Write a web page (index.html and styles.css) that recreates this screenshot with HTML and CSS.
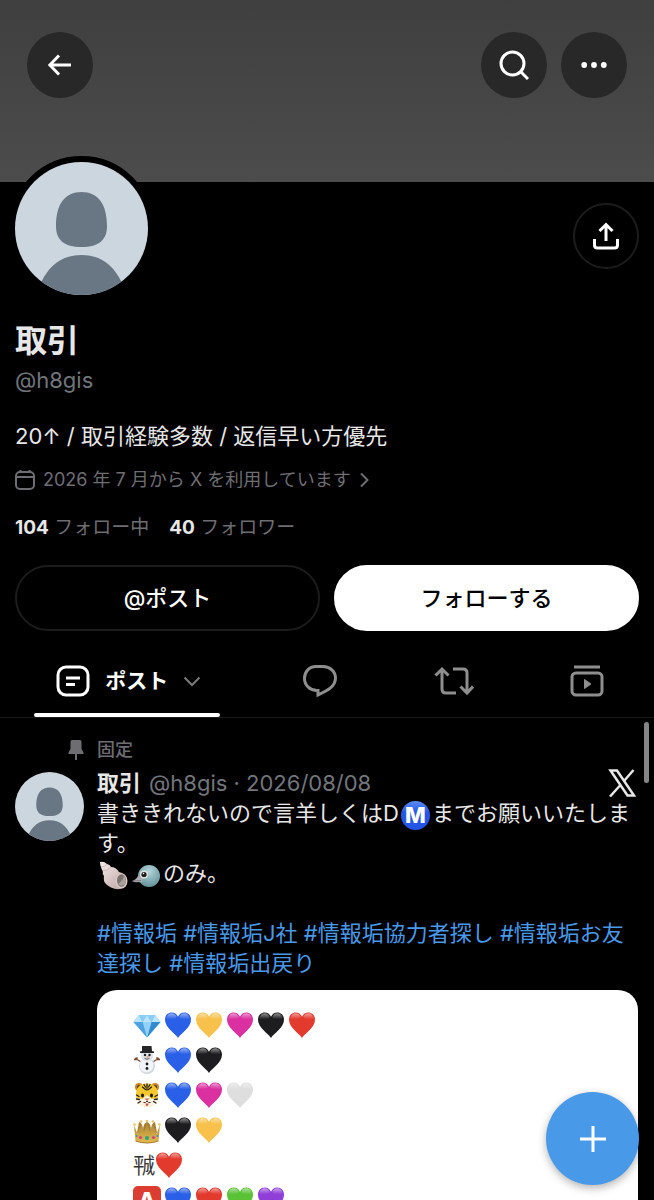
FILE: index.html
```
<!DOCTYPE html>
<html lang="ja">
<head>
  <meta charset="UTF-8">
  <meta name="viewport" content="width=device-width, initial-scale=1">
  <title>取引 (@h8gis)</title>
  <link rel="stylesheet" href="styles.css">
</head>
<body>
  <!-- shared drawings -->
  <svg class="sprite" aria-hidden="true">
    <defs>
      <linearGradient id="shine" x1="0" y1="0" x2="0" y2="1">
        <stop offset="0" stop-color="#fff" stop-opacity=".5"/>
        <stop offset="1" stop-color="#fff" stop-opacity="0"/>
      </linearGradient>
      <linearGradient id="gold" x1="0" y1="0" x2="0" y2="1">
        <stop offset="0" stop-color="#a98132"/>
        <stop offset="1" stop-color="#e3bc52"/>
      </linearGradient>
      <radialGradient id="bird" cx=".5" cy=".3" r=".7">
        <stop offset="0" stop-color="#b4d5da"/>
        <stop offset="1" stop-color="#64929b"/>
      </radialGradient>
      <linearGradient id="shell" x1="0" y1="0" x2="1" y2="1">
        <stop offset="0" stop-color="#f7ebe9"/>
        <stop offset="1" stop-color="#b9a19f"/>
      </linearGradient>
    </defs>

    <symbol id="person" viewBox="0 0 133 133">
      <path fill="#ccd6de" d="M0 0h133v133H0z"/>
      <path fill="#697684" d="M66.500 30C50 30 41 42 41 64c0 14 8 21 25.500 21S92 78 92 64c0-22-9-34-25.500-34zM66.500 93c-20 0-33 11-41 29v11h82v-11c-8-18-21-29-41-29z"/>
    </symbol>

    <symbol id="heart" viewBox="0 0 28 28">
      <path fill="currentColor" d="M14 27C11 22 1 17 1 8.500 1 4.500 4 1.500 7.500 1.500c3 0 5.300 1.600 6.500 4.200 1.200-2.600 3.500-4.200 6.500-4.200 3.500 0 6.500 3 6.500 7C27 17 17 22 14 27z"/>
      <path fill="url(#shine)" d="M2.500 8C2.500 4.500 5 2.300 7.500 2.300c2.500 0 4.500 1.500 5.200 4C11 9 4 8 2.500 8zM15.300 6.300c.7-2.500 2.700-4 5.200-4 2.500 0 5 2.200 5 5.700-1.500 0-8.500 1-10.200-1.700z"/>
    </symbol>

    <symbol id="gem" viewBox="0 0 28 28">
      <path fill="#62b5ef" d="M6 4h16l5.500 7L14 26.500.500 11z"/>
      <path fill="#b9e4fb" d="M6 4l3.500 7H.500zM14 4l4.500 7h-9zM22 4l5.500 7h-9z"/>
      <path fill="#8bcdf6" d="M6 4h8l-4.500 7zM14 4h8l-3.500 7z"/>
      <path fill="#338bd2" d="M18.500 11h9L14 26.500z"/>
      <path fill="#94d3f7" d="M9.500 11h9L14 26.500z"/>
      <path fill="#4da2e2" d="M.500 11h9L14 26.500z"/>
    </symbol>

    <symbol id="snowman" viewBox="0 0 28 28">
      <path stroke="#7b4c32" stroke-width="1.300" fill="none" d="M8 16l-6-4M4 13.500l-3 0M4 13.500V11M20 16l6-4M24 13.500h3M24 13.500V11"/>
      <circle cx="14" cy="20" r="8" fill="#cfd6df"/>
      <circle cx="13.500" cy="19.500" r="7" fill="#f1f4f8"/>
      <circle cx="14" cy="9.500" r="6" fill="#dfe4ea"/>
      <path fill="#252528" d="M9 0h9.500l.500 5 2 .500v1.500H7V5.500L9 5z"/>
      <g fill="#1c1c1f"><circle cx="12" cy="9" r="1.200"/><circle cx="16.500" cy="9" r="1.200"/><circle cx="14" cy="18" r="1.400"/><circle cx="14" cy="22.500" r="1.400"/></g>
      <path fill="#e2782e" d="M13.500 10.500h3l-2.500 1.500z"/>
      <path stroke="#333" fill="none" stroke-width=".800" d="M11.500 12.300q2.500 2 5 0"/>
    </symbol>

    <symbol id="tiger" viewBox="0 0 28 28">
      <circle cx="6" cy="6" r="4" fill="#c88626"/><circle cx="22" cy="6" r="4" fill="#c88626"/>
      <circle cx="6" cy="6" r="2" fill="#46341f"/><circle cx="22" cy="6" r="2" fill="#46341f"/>
      <path fill="#f6c72f" d="M14 2.500c8 0 11 5 11 11.500 0 8-4 11.500-11 11.500S3 22 3 14C3 7.500 6 2.500 14 2.500z"/>
      <path fill="#fbf3e2" d="M3 17l6.500 1L14 14l4.500 4 6.500-1c-.500 6-5 8.500-11 8.500S3.500 23 3 17z"/>
      <path stroke="#27221b" stroke-width="1.300" fill="none" stroke-linecap="round" d="M14 3v6M11 3.500l1.500 2.500M17 3.500L15.500 6M9.500 6l3 2.500M18.500 6l-3 2.500M3.500 14l2.500 1.500M24.500 14l-2.500 1.500M3.500 18l3 .500M24.500 18l-3 .500M5 22l2.500-1.500M23 22l-2.500-1.500"/>
      <ellipse cx="9.500" cy="14.500" rx="1.500" ry="2" fill="#1c1a17"/><ellipse cx="18.500" cy="14.500" rx="1.500" ry="2" fill="#1c1a17"/>
      <path fill="#c96a62" d="M11.500 17.500h5L14 20z"/>
      <path fill="none" stroke="#4b3326" d="M10.500 21.500q2 1 3.500-1.500 1.500 2.500 3.500 1.500"/>
      <path fill="#d5514f" d="M12.500 22.500h3q0 2.500-1.500 2.500t-1.500-2.500z"/>
    </symbol>

    <symbol id="crown" viewBox="0 0 28 28">
      <path fill="#a87e2d" d="M4 17L6 6q4 1 4 9 0-8 4-9 4 1 4 9 0-8 4-9l2 11z"/>
      <path fill="url(#gold)" d="M1 9l3.500 9L8 8l3 8 3-10 3 10 3-8 3.500 10L27 9l-1.500 16q-11.500 4-23 0z"/>
      <g fill="#e9c661"><circle cx="1.500" cy="8.500" r="1.300"/><circle cx="8" cy="5.500" r="1.300"/><circle cx="14" cy="5" r="1.300"/><circle cx="20" cy="5.500" r="1.300"/><circle cx="26.500" cy="8.500" r="1.300"/></g>
      <circle cx="7.500" cy="21.500" r="1.600" fill="#d6447c"/><circle cx="14" cy="22" r="2" fill="#23a77b"/><circle cx="20.500" cy="21.500" r="1.600" fill="#d6447c"/>
      <circle cx="3.500" cy="20" r="1" fill="#3f8dc4"/><circle cx="24.500" cy="20" r="1" fill="#3f8dc4"/>
      <path stroke="#a4782a" fill="none" d="M2.500 25q11.500 4 23 0"/>
    </symbol>

    <symbol id="spiral-shell" viewBox="0 0 29 29">
      <path fill="url(#shell)" d="M1 1q4-1 7 2 3 .500 4 3 5 0 8 5 7 1 8 8 0 8-7 9-8 1-14-5-3-3-2-8-2-2-1-5-2-2-2-4-1-2-1-5z"/>
      <path stroke="#c9b1ae" fill="none" stroke-width=".800" d="M2 6q4 0 6-3M3 10q6 0 9-4"/>
      <ellipse cx="22.500" cy="20" rx="6" ry="7.500" fill="#d9c9c5"/>
      <ellipse cx="22.500" cy="19.500" rx="4.500" ry="6.300" fill="#7b7370"/>
      <path fill="#aaa09b" d="M19 23q5-3 6-9 3 4 1.500 8-3 5-7.500 1z"/>
    </symbol>

    <symbol id="bird-head" viewBox="0 0 29 29">
      <circle cx="17" cy="15" r="11" fill="url(#bird)"/>
      <path fill="#a9acb0" d="M0 20q4-1 6-5 4 0 5 4-1 3-5 2-3 1-6-1z"/>
      <path stroke="#63676b" fill="none" stroke-width=".700" d="M1 20l8-.500"/>
      <circle cx="12" cy="13.500" r="4" fill="#dfe5e6"/><circle cx="12" cy="13.500" r="2.600" fill="#231b18"/><circle cx="11.500" cy="12.500" r=".800" fill="#fff"/>
    </symbol>
  </svg>

  <main class="profile">
    <header class="banner">
      <button class="round-btn" aria-label="戻る">
        <svg width="24" height="24" viewBox="0 0 24 24" class="line"><path d="M23 12H2M11 2.500L1.800 12l9.200 9.500"/></svg>
      </button>
      <div class="banner-actions">
        <button class="round-btn" aria-label="検索">
          <svg width="30" height="30" viewBox="0 0 30 30" class="line"><circle cx="13.500" cy="13.500" r="11.500"/><path d="M21.500 21.500L29 29"/></svg>
        </button>
        <button class="round-btn" aria-label="その他">
          <svg width="26" height="8" viewBox="0 0 26 8" fill="#fff"><circle cx="3.200" cy="4" r="2.900"/><circle cx="13" cy="4" r="2.900"/><circle cx="22.800" cy="4" r="2.900"/></svg>
        </button>
      </div>
    </header>

    <section class="info">
      <div class="info-top">
        <svg class="avatar avatar-large" role="img" aria-label="プロフィール画像"><use href="#person"/></svg>
        <button class="round-btn share" aria-label="共有">
          <svg width="28" height="28" viewBox="0 0 28 28" class="line"><path d="M14 19V2.500M7.500 9L14 2.500 20.500 9M2.500 17v6q0 3 3 3h17q3 0 3-3v-6"/></svg>
        </button>
      </div>
      <h1 class="name">取引</h1>
      <p class="handle">@h8gis</p>
      <p class="bio">20↑ / 取引経験多数 / 返信早い方優先</p>
      <a class="joined" href="#">
        <svg width="20" height="20" viewBox="0 0 20 20" class="thin"><rect x="1" y="2" width="18" height="17" rx="4"/><path d="M1 7h18M5.500 0v3M14.500 0v3"/></svg>
        <span>2026 年 7 月から X を利用しています</span>
        <svg width="10" height="16" viewBox="0 0 10 16" class="thin"><path d="M2 1.500L8.500 8 2 14.500"/></svg>
      </a>
      <p class="counts">
        <a href="#"><b>104</b> フォロー中</a>
        <a href="#"><b>40</b> フォロワー</a>
      </p>
      <div class="actions">
        <button class="pill">@ポスト</button>
        <button class="pill pill-white">フォローする</button>
      </div>
    </section>

    <nav class="tabs" role="tablist">
      <button class="tab active" role="tab" aria-selected="true">
        <span class="tab-inner">
          <svg width="34" height="32" viewBox="0 0 34 32" class="line"><rect x="2" y="2" width="30" height="28" rx="8"/><path d="M10 13h14M10 19.500h9"/></svg>
          ポスト
          <svg width="18" height="11" viewBox="0 0 18 11" class="chevron"><path d="M1.500 1.500L9 9l7.500-7.500"/></svg>
        </span>
      </button>
      <button class="tab" role="tab" aria-label="返信">
        <svg width="36" height="34" viewBox="0 0 36 34" class="line"><path d="M14 2.500h7c7 0 12.500 5 12.500 11.500 0 9-9 13-17.500 17v-4.500C8 27 2.500 21 2.500 14.500 2.500 8 7 2.500 14 2.500z"/></svg>
      </button>
      <button class="tab" role="tab" aria-label="リポスト">
        <svg width="40" height="30" viewBox="0 0 40 30" class="line"><path d="M8 4v19q0 4 4 4h10M1.500 9.500L8 3l6.500 6.500M19 3h10q4 0 4 4v19M26.500 20.500L33 27l6-6.500"/></svg>
      </button>
      <button class="tab" role="tab" aria-label="動画">
        <svg width="34" height="32" viewBox="0 0 34 32" class="line"><rect x="2" y="8" width="30" height="22" rx="4"/><path d="M4 2h26"/><path d="M14.500 14.500v9l6.500-4.500z" fill="currentColor" stroke-width="1"/></svg>
      </button>
    </nav>

    <article class="post">
      <svg class="pin" width="16" height="20" viewBox="0 0 16 20"><path fill="currentColor" d="M4 0h8q1.500 0 1.500 1.500V9l2 3.500V14H9v6H7v-6H.500v-1.500l2-3.500V1.500Q2.500 0 4 0z"/></svg>
      <p class="pinned">固定</p>

      <svg class="avatar avatar-small" role="img" aria-label="プロフィール画像"><use href="#person"/></svg>
      <div class="post-main">
        <div class="post-head">
          <b>取引</b>
          <span class="meta">@h8gis · 2026/08/08</span>
          <svg class="x-logo" width="28" height="28" viewBox="0 0 28 28" fill="none" stroke="#e7e7e7"><path stroke-width="2.500" d="M2.500 1.500h6.500L26 26.500h-6.500z"/><path stroke-width="2.500" d="M25.500 1L16 12M12 16.500L2 27.500"/></svg>
        </div>
        <div class="post-text">
          <p>書ききれないので言羊しくはD<span class="emoji metro">M</span>までお願いいたします。</p>
          <p><svg class="emoji"><use href="#spiral-shell"/></svg><svg class="emoji"><use href="#bird-head"/></svg>のみ。</p>
          <p class="tags"><a href="#">#情報垢</a> <a href="#">#情報垢J社</a> <a href="#">#情報垢協力者探し</a> <a href="#">#情報垢お友達探し</a> <a href="#">#情報垢出戻り</a></p>
        </div>
        <div class="card">
          <div class="row"><svg><use href="#gem"/></svg><svg class="blue"><use href="#heart"/></svg><svg class="yellow"><use href="#heart"/></svg><svg class="pink"><use href="#heart"/></svg><svg class="black"><use href="#heart"/></svg><svg class="red"><use href="#heart"/></svg></div>
          <div class="row"><svg><use href="#snowman"/></svg><svg class="blue"><use href="#heart"/></svg><svg class="black"><use href="#heart"/></svg></div>
          <div class="row"><svg><use href="#tiger"/></svg><svg class="blue"><use href="#heart"/></svg><svg class="pink"><use href="#heart"/></svg><svg class="white"><use href="#heart"/></svg></div>
          <div class="row"><svg><use href="#crown"/></svg><svg class="black"><use href="#heart"/></svg><svg class="yellow"><use href="#heart"/></svg></div>
          <div class="row era"><span>㍻</span><svg class="red"><use href="#heart"/></svg></div>
          <div class="row"><span class="letter-a">A</span><svg class="blue"><use href="#heart"/></svg><svg class="red"><use href="#heart"/></svg><svg class="green"><use href="#heart"/></svg><svg class="purple"><use href="#heart"/></svg></div>
        </div>
      </div>
    </article>
  </main>

  <div class="scroll-thumb"></div>
  <button class="compose" aria-label="ポストする">
    <svg width="28" height="28" viewBox="0 0 28 28"><path d="M14 1v26M1 14h26" stroke="#fff" stroke-width="3"/></svg>
  </button>
</body>
</html>
```

FILE: styles.css
```
* {
  box-sizing: border-box;
}

body {
  margin: 0;
  height: 100vh;
  overflow: hidden;
  background: #000;
  color: #e7e7e7;
  font-family: Inter, "Noto Sans CJK JP", sans-serif;
  font-size: 22px;
  line-height: 30px;
}

h1, p {
  margin: 0;
}

a {
  color: inherit;
  text-decoration: none;
}

button {
  padding: 0;
  border: none;
  background: none;
  color: inherit;
  font: inherit;
  cursor: pointer;
}

svg {
  flex-shrink: 0;
}

.sprite {
  position: absolute;
  width: 0;
  height: 0;
}

.line {
  fill: none;
  stroke: currentColor;
  stroke-width: 3;
}

.thin {
  fill: none;
  stroke: currentColor;
  stroke-width: 2;
}

/* banner */
.banner {
  display: flex;
  justify-content: space-between;
  height: 182px;
  padding: 32px 27px;
  background: linear-gradient(#3f3f3f, #4c4c4c);
}

.banner-actions {
  display: flex;
  gap: 14px;
}

.round-btn {
  display: flex;
  align-items: center;
  justify-content: center;
  width: 66px;
  height: 66px;
  border-radius: 50%;
  background: #282828;
  color: #fff;
}

.share {
  margin-top: 21px;
  border: 2px solid #1c1c1c;
  background: none;
}

/* profile info */
.info {
  padding: 0 15px;
}

.info-top {
  display: flex;
  justify-content: space-between;
}

.avatar {
  display: block;
  border-radius: 50%;
}

.avatar-large {
  width: 145px;
  height: 145px;
  margin: -26px 0 0 -6px;
  border: 6px solid #000;
  background: #000;
}

.avatar-small {
  width: 69px;
  height: 69px;
  margin-top: 4px;
}

.name {
  margin-top: 20px;
  font-size: 32px;
  line-height: 40px;
}

.handle {
  margin-top: 4px;
  color: #71767b;
}

.bio {
  margin-top: 26px;
}

.joined {
  display: flex;
  align-items: center;
  gap: 8px;
  margin-top: 14px;
  color: #6e6e72;
  font-size: 18px;
}

.counts {
  display: flex;
  gap: 20px;
  margin-top: 18px;
  color: #6e6e72;
  font-size: 19px;
}

.counts b {
  color: #e7e7e7;
  font-weight: 700;
}

.actions {
  display: flex;
  gap: 14px;
  margin-top: 22px;
}

.pill {
  flex: 1;
  height: 66px;
  border: 2px solid #1c1c1c;
  border-radius: 33px;
  color: #fff;
  font-weight: 500;
}

.pill-white {
  border-color: #fff;
  background: #fff;
  color: #000;
}

/* tabs */
.tabs {
  display: grid;
  grid-template-columns: 1.9fr 1fr 1fr 1fr;
  height: 87px;
  border-bottom: 1px solid #1a1a1a;
}

.tab {
  display: flex;
  align-items: center;
  justify-content: center;
  padding-top: 14px;
  color: #8e8e8e;
}

.tab.active {
  padding-top: 0;
  color: #fff;
  font-size: 21px;
  font-weight: 700;
}

.tab-inner {
  position: relative;
  display: flex;
  align-items: center;
  justify-content: center;
  gap: 15px;
  width: 186px;
  height: 100%;
  padding: 14px 0 0 4px;
}

/* underline of the open tab */
.tab-inner::after {
  content: "";
  position: absolute;
  right: 0;
  bottom: 0;
  left: 0;
  height: 4px;
  border-radius: 2px;
  background: #fff;
}

.chevron {
  fill: none;
  stroke: #7a7a7a;
  stroke-width: 2;
}

/* post */
.post {
  display: grid;
  grid-template-columns: 69px 1fr;
  column-gap: 13px;
  padding: 20px 16px 0 15px;
}

.pin {
  justify-self: end;
  margin-top: 2px;
  color: #6e6e72;
}

.pinned {
  margin-bottom: 6px;
  color: #6e6e72;
  font-size: 18px;
  font-weight: 500;
  line-height: 24px;
}

.post-head {
  display: flex;
  align-items: center;
  gap: 8px;
  height: 30px;
  padding-right: 2px;
}

.meta {
  flex: 1;
  color: #71767b;
}

.tags {
  margin-top: 30px;
  color: #4999e9;
}

.emoji {
  display: inline-block;
  width: 29px;
  height: 29px;
  margin: -4px 2px;
  vertical-align: middle;
}

.metro {
  border-radius: 50%;
  background: linear-gradient(#5b8dfa, #2456e6 40%);
  color: #fff;
  font-weight: 800;
  line-height: 29px;
  text-align: center;
}

.card {
  margin-top: 12px;
  padding: 17px 36px;
  border-radius: 20px;
  background: #fff;
  color: #333;
}

.row {
  display: flex;
  align-items: center;
  gap: 3px;
  height: 35px;
}

.row svg {
  width: 28px;
  height: 28px;
}

.row.era {
  gap: 0;
}

.letter-a {
  width: 28px;
  height: 28px;
  border-radius: 5px;
  background: #dc3d32;
  color: #fff;
  font-weight: 800;
  line-height: 28px;
  text-align: center;
}

.blue { color: #2a5fe8; }
.yellow { color: #f7c14b; }
.pink { color: #da30a0; }
.black { color: #1d1d1f; }
.red { color: #e33a2e; }
.white { color: #dedede; }
.green { color: #5bc236; }
.purple { color: #8f3fd8; }

/* floating */
.scroll-thumb {
  position: fixed;
  top: 722px;
  right: 5px;
  width: 5px;
  height: 61px;
  border-radius: 3px;
  background: #858585;
}

.compose {
  position: fixed;
  right: 15px;
  bottom: 15px;
  display: flex;
  align-items: center;
  justify-content: center;
  width: 93px;
  height: 93px;
  border-radius: 50%;
  background: #4999e9;
  box-shadow: 0 3px 8px rgba(0, 0, 0, 0.3);
}
```
